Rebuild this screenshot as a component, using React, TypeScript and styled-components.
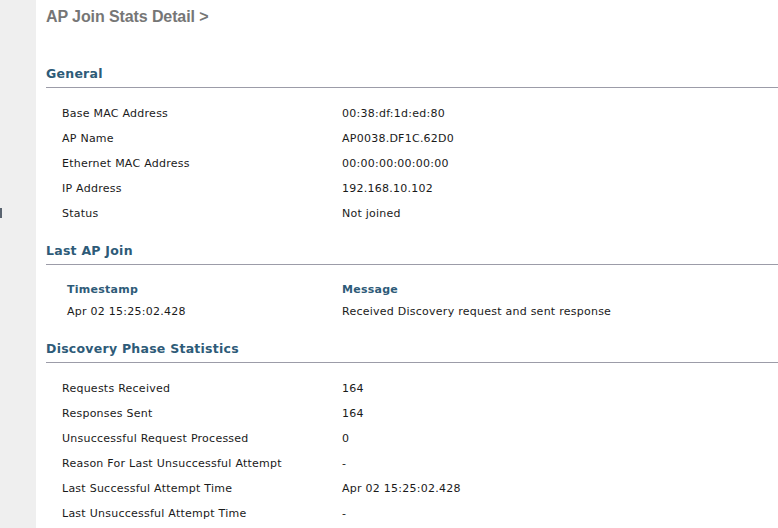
import React from "react";
import styled, { createGlobalStyle } from "styled-components";

const Global = createGlobalStyle`
  html, body { margin: 0; padding: 0; background: #ffffff; }
  body { font-family: "DejaVu Sans", Verdana, sans-serif; }
`;

const Page = styled.div`
  display: flex;
  width: 778px;
  height: 528px;
  overflow: hidden;
`;

const Sidebar = styled.div`
  width: 36px;
  flex: none;
  background: #efefef;
  padding-top: 208px;
  box-sizing: border-box;
`;

const SideMark = styled.div`
  width: 2px;
  height: 10px;
  background: #5a6470;
`;

const Main = styled.div`
  flex: 1;
  padding-left: 10px;
`;

const Title = styled.div`
  height: 61px;
  box-sizing: border-box;
  padding-top: 7px;
  font-family: "Liberation Sans", Arial, sans-serif;
  font-weight: bold;
  font-size: 16px;
  letter-spacing: -0.1px;
  line-height: 20px;
  color: #767676;
`;

const Heading = styled.div`
  height: 27px;
  box-sizing: border-box;
  border-bottom: 1px solid #9c9ca8;
  font-weight: bold;
  font-size: 12.5px;
  letter-spacing: 0.25px;
  line-height: 26px;
  color: #2e5b78;
`;

const SectionBody = styled.div<{ $padBottom: number }>`
  padding-top: 13px;
  padding-bottom: ${(p) => p.$padBottom}px;
`;

const Row = styled.div<{ $indent: number; $h: number }>`
  display: grid;
  grid-template-columns: ${(p) => 296 - p.$indent}px 1fr;
  padding-left: ${(p) => p.$indent}px;
  height: ${(p) => p.$h}px;
  align-items: center;
  font-size: 11px;
  letter-spacing: 0.25px;
  color: #1a1a1a;
  white-space: nowrap;
`;

const HeaderRow = styled(Row)`
  font-weight: bold;
  color: #2e5b78;
`;

type Pair = [string, string];

const general: Pair[] = [
  ["Base MAC Address", "00:38:df:1d:ed:80"],
  ["AP Name", "AP0038.DF1C.62D0"],
  ["Ethernet MAC Address", "00:00:00:00:00:00"],
  ["IP Address", "192.168.10.102"],
  ["Status", "Not joined"],
];

const discovery: Pair[] = [
  ["Requests Received", "164"],
  ["Responses Sent", "164"],
  ["Unsuccessful Request Processed", "0"],
  ["Reason For Last Unsuccessful Attempt", "-"],
  ["Last Successful Attempt Time", "Apr 02 15:25:02.428"],
  ["Last Unsuccessful Attempt Time", "-"],
];

export default function App() {
  return (
    <>
      <Global />
      <Page>
        <Sidebar>
          <SideMark />
        </Sidebar>
        <Main>
          <Title>AP Join Stats Detail &gt;</Title>

          <Heading>General</Heading>
          <SectionBody $padBottom={12}>
            {general.map(([k, v]) => (
              <Row key={k} $indent={16} $h={25}>
                <span>{k}</span>
                <span>{v}</span>
              </Row>
            ))}
          </SectionBody>

          <Heading>Last AP Join</Heading>
          <SectionBody $padBottom={14}>
            <HeaderRow $indent={21} $h={22}>
              <span>Timestamp</span>
              <span>Message</span>
            </HeaderRow>
            <Row $indent={21} $h={22}>
              <span>Apr 02 15:25:02.428</span>
              <span>Received Discovery request and sent response</span>
            </Row>
          </SectionBody>

          <Heading>Discovery Phase Statistics</Heading>
          <SectionBody $padBottom={12}>
            {discovery.map(([k, v]) => (
              <Row key={k} $indent={16} $h={25}>
                <span>{k}</span>
                <span>{v}</span>
              </Row>
            ))}
          </SectionBody>
        </Main>
      </Page>
    </>
  );
}
